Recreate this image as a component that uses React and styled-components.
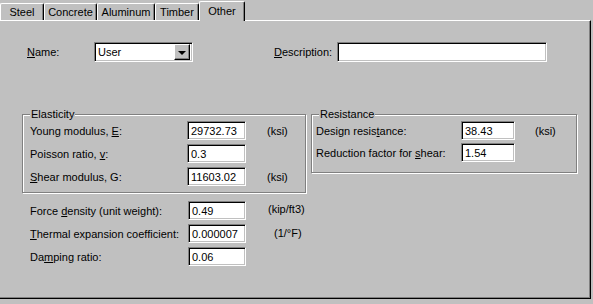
import React from "react";
import styled, { createGlobalStyle } from "styled-components";

const GlobalStyle = createGlobalStyle`
  html, body {
    margin: 0;
    padding: 0;
    background: #c0c0c0;
  }
  body {
    font-family: "Liberation Sans", Arial, sans-serif;
    font-size: 11px;
    color: #000;
  }
`;

const Dialog = styled.div`
  width: 593px;
  height: 304px;
  background: #c0c0c0;
  overflow: hidden;
`;

const TabStrip = styled.div`
  display: flex;
  align-items: flex-end;
  height: 20px;
  position: relative;
  z-index: 1;
`;

const Tab = styled.div`
  box-sizing: border-box;
  width: ${(p) => p.$w}px;
  height: ${(p) => (p.$active ? 20 : 17)}px;
  margin-bottom: ${(p) => (p.$active ? -1 : 0)}px;
  padding-top: ${(p) => (p.$active ? 3 : 2)}px;
  display: flex;
  justify-content: center;
  background: #c0c0c0;
  border-top: 1px solid #fff;
  border-left: 1px solid #fff;
  border-right: 1px solid #000;
  border-radius: 2px 2px 0 0;
  box-shadow: inset -1px 0 0 #808080;
  font-size: 11px;
  line-height: 13px;
  white-space: nowrap;
`;

const Panel = styled.div`
  box-sizing: border-box;
  width: 591px;
  height: 279px;
  border-top: 1px solid #fff;
  border-right: 1px solid #000;
  border-bottom: 1px solid #000;
  box-shadow: inset -1px -1px 0 #808080;
  padding-top: 21px;
`;

const TopRow = styled.div`
  display: flex;
  align-items: center;
  height: 20px;
  padding-left: 27px;
`;

const Label = styled.span`
  display: inline-block;
  width: ${(p) => (p.$w ? `${p.$w}px` : "auto")};
  margin-left: ${(p) => p.$ml || 0}px;
  white-space: nowrap;
`;

const Key = styled.span`
  text-decoration: underline;
  text-underline-offset: 1px;
`;

const Combo = styled.div`
  box-sizing: border-box;
  width: 99px;
  height: 20px;
  display: flex;
  align-items: center;
  background: #fff;
  border: 1px solid;
  border-color: #808080 #fff #fff #808080;
  box-shadow: inset 1px 1px 0 #000, inset -1px -1px 0 #c0c0c0;
  padding: 0 2px 0 3px;
`;

const ComboText = styled.span`
  flex: 1;
`;

const DropButton = styled.div`
  box-sizing: border-box;
  width: 16px;
  height: 16px;
  display: flex;
  align-items: center;
  justify-content: center;
  background: #c0c0c0;
  border: 1px solid;
  border-color: #fff #000 #000 #fff;
  box-shadow: inset -1px -1px 0 #808080;
`;

const Arrow = styled.div`
  width: 0;
  height: 0;
  border-left: 4px solid transparent;
  border-right: 4px solid transparent;
  border-top: 4px solid #000;
  margin-top: 1px;
`;

const Field = styled.div`
  box-sizing: border-box;
  width: ${(p) => p.$w}px;
  height: ${(p) => p.$h || 19}px;
  background: #fff;
  border: 1px solid;
  border-color: #808080 #fff #fff #808080;
  box-shadow: inset 1px 1px 0 #000, inset -1px -1px 0 #c0c0c0;
  padding: 0 3px;
  display: flex;
  align-items: center;
  white-space: nowrap;
`;

const Groups = styled.div`
  display: flex;
  align-items: flex-start;
  gap: 5px;
  margin-top: 52px;
  padding-left: 22px;
`;

const GroupBox = styled.div`
  box-sizing: border-box;
  width: ${(p) => p.$w}px;
  height: ${(p) => p.$h}px;
  border: 1px solid #808080;
  box-shadow: inset 1px 1px 0 #fff, 1px 1px 0 #fff;
  padding: 0 0 0 ${(p) => p.$pl}px;
`;

const Legend = styled.div`
  display: table;
  margin: -7px 0 0 ${(p) => 7 - p.$pl}px;
  padding: 0 1px;
  line-height: 13px;
  background: #c0c0c0;
`;

const FormGrid = styled.div`
  display: grid;
  grid-template-columns: ${(p) => p.$cols};
  row-gap: ${(p) => p.$gap}px;
  align-items: center;
`;

const Unit = styled.span`
  padding-left: ${(p) => p.$pl || 0}px;
  margin-top: ${(p) => (p.$up ? -p.$up : 0)}px;
  white-space: nowrap;
`;

const Lower = styled.div`
  margin-top: 8px;
  padding-left: 30px;
`;

export default function App() {
  return (
    <Dialog>
      <GlobalStyle />
      <TabStrip>
        <Tab $w={44}>Steel</Tab>
        <Tab $w={53}>Concrete</Tab>
        <Tab $w={58}>Aluminum</Tab>
        <Tab $w={44}>Timber</Tab>
        <Tab $w={46} $active>Other</Tab>
      </TabStrip>
      <Panel>
        <TopRow>
          <Label $w={67}><Key>N</Key>ame:</Label>
          <Combo>
            <ComboText>User</ComboText>
            <DropButton><Arrow /></DropButton>
          </Combo>
          <Label $w={63} $ml={81}><Key>D</Key>escription:</Label>
          <Field $w={210} $h={20} />
        </TopRow>

        <Groups>
          <GroupBox $w={284} $h={79} $pl={7}>
            <Legend $pl={7}>Elasticity</Legend>
            <FormGrid $cols="157px 59px auto" $gap={4}>
              <span>Young modulus, <Key>E</Key>:</span>
              <Field $w={59}>29732.73</Field>
              <Unit $pl={21}>(ksi)</Unit>
              <span>Poisson ratio, <Key>v</Key>:</span>
              <Field $w={59}>0.3</Field>
              <span />
              <span><Key>S</Key>hear modulus, G:</span>
              <Field $w={59}>11603.02</Field>
              <Unit $pl={21}>(ksi)</Unit>
            </FormGrid>
          </GroupBox>

          <GroupBox $w={266} $h={59} $pl={4}>
            <Legend $pl={4}>Resistance</Legend>
            <FormGrid $cols="145px 54px auto" $gap={3}>
              <span>Design resis<Key>t</Key>ance:</span>
              <Field $w={54}>38.43</Field>
              <Unit $pl={20}>(ksi)</Unit>
              <span>Reduction factor for <Key>s</Key>hear:</span>
              <Field $w={54}>1.54</Field>
              <span />
            </FormGrid>
          </GroupBox>
        </Groups>

        <Lower>
          <FormGrid $cols="158px 58px auto" $gap={4}>
            <span>Force <Key>d</Key>ensity (unit weight):</span>
            <Field $w={58}>0.49</Field>
            <Unit $pl={22} $up={4}>(kip/ft3)</Unit>
            <span><Key>T</Key>hermal expansion coefficient:</span>
            <Field $w={58}>0.000007</Field>
            <Unit $pl={28} $up={2}>(1/°F)</Unit>
            <span>Da<Key>m</Key>ping ratio:</span>
            <Field $w={58}>0.06</Field>
            <span />
          </FormGrid>
        </Lower>
      </Panel>
    </Dialog>
  );
}
